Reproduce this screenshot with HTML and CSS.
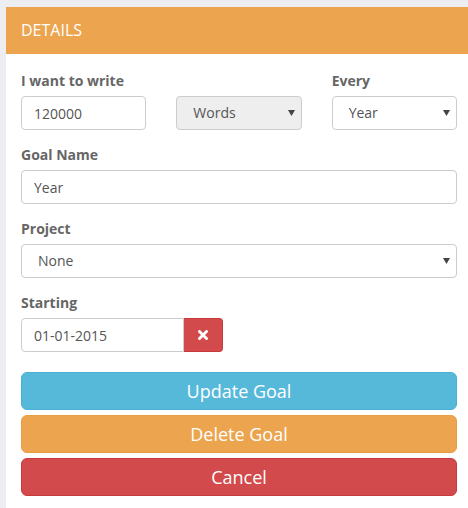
FILE: index.html
```html
<!DOCTYPE html>
<html>
<head>
<meta charset="utf-8">
<link rel="stylesheet" href="styles.css">
</head>
<body>
<div class="panel">
  <div class="panel-heading">DETAILS</div>
  <div class="panel-body">
    <div class="row">
      <div class="col">
        <label class="lbl">I want to write</label>
        <input class="ctl" type="text" value="120000">
      </div>
      <div class="col">
        <label class="lbl">&nbsp;</label>
        <div class="sel-wrap">
          <div class="ctl sel sel-gray">Words</div>
          <svg class="caret" width="7" height="6" viewBox="0 0 7 6"><path d="M0 0H7L3.5 6Z" fill="#444"/></svg>
        </div>
      </div>
      <div class="col">
        <label class="lbl">Every</label>
        <div class="sel-wrap">
          <div class="ctl sel">Year</div>
          <svg class="caret" width="7" height="6" viewBox="0 0 7 6"><path d="M0 0H7L3.5 6Z" fill="#444"/></svg>
        </div>
      </div>
    </div>
    <div class="group">
      <label class="lbl">Goal Name</label>
      <input class="ctl" type="text" value="Year">
    </div>
    <div class="group">
      <label class="lbl">Project</label>
      <div class="sel-wrap">
        <div class="ctl sel">None</div>
        <svg class="caret" width="7" height="6" viewBox="0 0 7 6"><path d="M0 0H7L3.5 6Z" fill="#444"/></svg>
      </div>
    </div>
    <div class="group">
      <label class="lbl">Starting</label>
      <div class="input-group">
        <input class="ctl date" type="text" value="01-01-2015">
        <button class="clear-btn" type="button">
          <svg width="10" height="10" viewBox="0 0 10 10"><path d="M1.5 1.5L8.5 8.5M8.5 1.5L1.5 8.5" stroke="#fff" stroke-width="2.8" stroke-linecap="square"/></svg>
        </button>
      </div>
    </div>
    <div class="actions">
      <button class="btn btn-info" type="button">Update Goal</button>
      <button class="btn btn-warning" type="button">Delete Goal</button>
      <button class="btn btn-danger" type="button">Cancel</button>
    </div>
  </div>
</div>
</body>
</html>
```
FILE: styles.css
```css
html, body {
  margin: 0;
  padding: 0;
  overflow: hidden;
  background: #eceef2;
  font-family: "Open Sans", "Liberation Sans", sans-serif;
}
.panel {
  margin: 7px 0 0 6px;
  width: 466px;
  min-height: 520px;
  background: #fff;
}
.panel-heading {
  height: 47px;
  line-height: 46px;
  padding-left: 15px;
  background: #eca44e;
  color: #fff;
  font-size: 16px;
}
.panel-body {
  padding: 17px 15px 15px 15px;
}
.row {
  display: grid;
  grid-template-columns: 1fr 1fr 1fr;
  column-gap: 30px;
  margin-bottom: 15px;
}
.group {
  margin-bottom: 15px;
}
.lbl {
  display: block;
  font-size: 14px;
  line-height: 20px;
  font-weight: 700;
  color: #666;
  margin-bottom: 5px;
}
.ctl {
  display: block;
  box-sizing: border-box;
  width: 100%;
  height: 34px;
  margin: 0;
  padding: 6px 12px;
  border: 1px solid #ccc;
  border-radius: 4px;
  background: #fff;
  font-family: "Open Sans", "Liberation Sans", sans-serif;
  font-size: 14px;
  line-height: 20px;
  color: #555;
  outline: none;
}
.sel-wrap {
  position: relative;
}
.sel {
  padding-left: 16px;
}
.sel-gray {
  background: #eee;
}
.caret {
  position: absolute;
  right: 7px;
  top: 14px;
}
.input-group {
  display: flex;
  width: 202px;
}
.date {
  width: 163px;
  border-radius: 4px 0 0 4px;
}
.clear-btn {
  width: 39px;
  height: 34px;
  border: 1px solid #c9393c;
  border-left: none;
  border-radius: 0 4px 4px 0;
  background: #d24a4b;
  display: flex;
  align-items: center;
  justify-content: center;
  padding: 0;
}
.actions {
  margin-top: 20px;
  display: flex;
  flex-direction: column;
  gap: 5px;
}
.btn {
  display: block;
  width: 100%;
  height: 38px;
  border-radius: 6px;
  border: 1px solid transparent;
  font-family: "Open Sans", "Liberation Sans", sans-serif;
  font-size: 18px;
  color: #fff;
  padding: 0;
  line-height: 36px;
}
.btn-info {
  background: #57b9da;
  border-color: #48b1d5;
}
.btn-warning {
  background: #eca44e;
  border-color: #eb9c3f;
}
.btn-danger {
  background: #d24a4b;
  border-color: #c93a3c;
}
```
